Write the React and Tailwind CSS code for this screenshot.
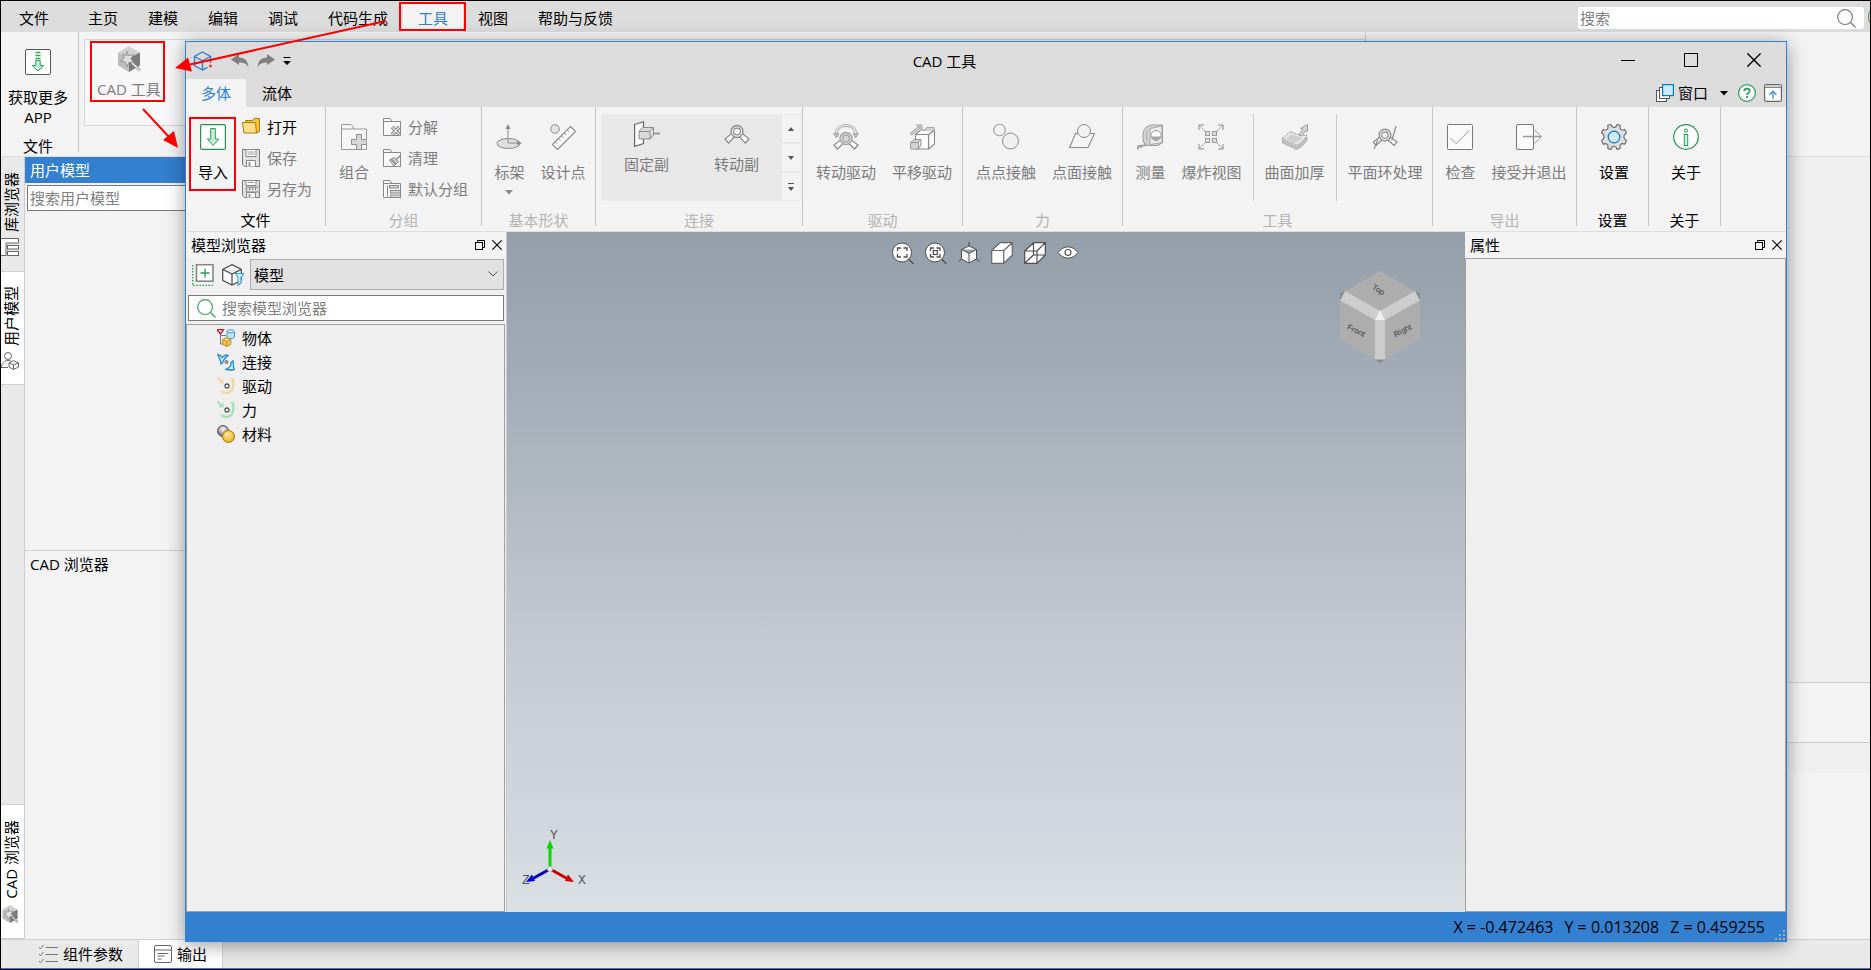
import React from "react";

/* ---------- icon helpers ---------- */

function Svg({ size = 26, box = 26, children, className = "" }) {
  return (
    <svg
      width={size}
      height={size}
      viewBox={`0 0 ${box} ${box}`}
      fill="none"
      aria-hidden="true"
      className={`block shrink-0 ${className}`}
    >
      {children}
    </svg>
  );
}

const G = "#8a8a8a";

/* ---------- main window icons ---------- */

const GetAppIcon = () => (
  <Svg>
    <rect x="0.5" y="0.5" width="25" height="25" rx="1.5" fill="#fff" stroke="#555" />
    <path d="M10.500 3.500h5M10.500 6.500h5M10.500 9.500h5" stroke="#2fa351" strokeWidth="1.6" />
    <path d="M10.800 11.500h4.400v5h3.600L13 22l-5.800-5.500h3.600z" fill="#c9f5dc" stroke="#2a9b5c" />
  </Svg>
);

const CadToolIcon = ({ size = 26 }) => (
  <Svg size={size}>
    <path d="M13 0 24 6.500 13 12 2 6.500z" fill="#d2d2d2" />
    <path d="M2 6.500 13 12v14L2 19.500z" fill="#bdbdbd" />
    <path d="M24 6.500 13 12v14l11-6.500z" fill="#7c7c7c" />
    <path d="m10.500 5 2.200 4.500 5-.8-2.900 4.100 3 4-4.900-.4-2 4.400-1.600-4.800-5-.6 4-3.100-1.400-4.500 4 2z" fill="#dedede" stroke="#8d8d8d" strokeWidth="0.9" />
    <path d="m15.500 16.500 8.500 8" stroke="#8f8f8f" strokeWidth="3" />
    <path d="m16 17 8 7.500" stroke="#efefef" strokeWidth="1.200" />
  </Svg>
);

const SearchIcon = ({ color = "#777", size = 20 }) => (
  <Svg size={size} box={20}>
    <circle cx="8.500" cy="8.500" r="7.800" stroke={color} strokeWidth="1.200" />
    <path d="m14 14 5.500 5.500" stroke={color} strokeWidth="1.300" />
  </Svg>
);

const LibraryIcon = () => (
  <Svg size={18} box={18}>
    <path d="M0 .5h17.500v4.500H5V17.500H0" fill="#fff" stroke="#666" />
    <rect x="6.500" y="7.500" width="11" height="3.500" fill="#fff" stroke="#666" />
    <rect x="6.500" y="13.500" width="11" height="4" fill="#fff" stroke="#666" />
  </Svg>
);

const UserModelIcon = () => (
  <Svg size={18} box={18}>
    <circle cx="7" cy="4" r="3.500" stroke="#666" />
    <path d="M0 15.500h7M.5 15.500c0-4 2.500-7 6.500-7 1.500 0 2.500.4 3.500 1" stroke="#666" />
    <path d="m12.500 8.500 5 2.500v4l-5 2.500-4.500-2.500v-4zM8 11l4.500 2 5-2M12.500 13v4.500" fill="#fff" stroke="#666" />
  </Svg>
);

const ParamsIcon = () => (
  <Svg size={19} box={19}>
    <path d="M6.500 2.500H19M6.500 9.500H19M6.500 16.500H19" stroke="#777" />
    <path d="m0 2 1.500 1.800L4.500 0M0 9l1.500 1.800L4.500 7M0 16l1.500 1.800L4.500 14" stroke="#777" />
  </Svg>
);

const OutputIcon = () => (
  <Svg size={18} box={18}>
    <rect x="0.5" y="0.5" width="17" height="17" rx="1.500" fill="#fff" stroke="#666" />
    <path d="M.5 5h17M3.500 8.500h11M3.500 11h7M3.500 14h4" stroke="#666" />
  </Svg>
);

/* ---------- title bar icons ---------- */

const LogoIcon = () => (
  <Svg size={20} box={20}>
    <path d="M17.500 12V5.500L9.500 1 1.500 5.500v9.200L9.500 19l5-2.700M1.500 5.500l8 4.300 8-4.300M9.500 9.800V19" stroke="#3380d0" strokeWidth="1.400" />
    <circle cx="17.500" cy="15" r="1.500" fill="#f03a3a" />
  </Svg>
);

const UndoIcon = () => (
  <Svg size={18} box={18}>
    <path d="M0 7.500 8 2v3.500c6 .3 9 3.500 9.500 9.500-2.500-3.500-5-4.500-9.500-4.500V13z" fill="#808080" />
  </Svg>
);

const CaretDown = () => (
  <Svg size={8} box={8}>
    <path d="M0 2h8L4 6.500z" fill="#000" />
  </Svg>
);

const WindowsIcon = () => (
  <Svg size={18} box={18}>
    <rect x="0.5" y="6.500" width="10" height="11" fill="#fff" stroke="#555" />
    <rect x="3.500" y="3.500" width="10" height="11" fill="#fff" stroke="#555" />
    <rect x="6.600" y="0.600" width="10.800" height="11" fill="#cfe9ff" stroke="#0a78c8" strokeWidth="1.200" />
  </Svg>
);

const HelpIcon = () => (
  <Svg size={18} box={18}>
    <circle cx="9" cy="9" r="8.400" fill="#fff" stroke="#2d9a55" strokeWidth="1.200" />
    <path d="M6.300 7c0-3.200 5.400-3.200 5.400 0 0 1.900-2.700 1.900-2.700 4" stroke="#2d9a55" strokeWidth="1.800" />
    <rect x="8.100" y="12" width="1.900" height="1.900" fill="#2d9a55" />
  </Svg>
);

const CollapseIcon = () => (
  <Svg size={18} box={18}>
    <rect x="0.6" y="0.6" width="16.800" height="16.800" rx="1.500" fill="#fff" stroke="#666" strokeWidth="1.200" />
    <path d="M1 3.500h16" stroke="#777" />
    <path d="M1.200 1.200h15.600v2H1.200z" fill="#ccc" />
    <path d="M9 15V8M5.500 10.800 9 7.300l3.500 3.500" stroke="#3b9bd9" strokeWidth="1.400" />
  </Svg>
);

/* ---------- ribbon icons ---------- */

const ImportIcon = () => (
  <Svg>
    <rect x="0.600" y="0.600" width="24.800" height="24.800" rx="1.500" fill="#fff" stroke="#2a8c55" strokeWidth="1.200" />
    <path d="M10.700 4.500h4.600V15h3.400L13 21.500 7.300 15h3.400z" fill="#c5f4da" stroke="#2a9b5c" />
  </Svg>
);

const OpenIcon = () => (
  <Svg size={18} box={18}>
    <path d="M3.500 2.500h7l1.500-2h5.500v13l-3 1.500z" fill="#f5c33b" stroke="#a87b14" />
    <path d="M.5 4.500h13l1 10.500H2z" fill="#ffdf86" stroke="#a87b14" />
  </Svg>
);

const SaveIcon = () => (
  <Svg size={18} box={18}>
    <path d="M.5.5h17v17H2.500l-2-2z" fill="#e2e2e2" stroke="#777" />
    <path d="M4 .5h10v7H4z" fill="#fff" stroke="#888" />
    <path d="M5.500 3h7M5.500 5h7" stroke="#999" />
    <path d="M4.500 17.500v-6h9v6" fill="#fff" stroke="#888" />
    <rect x="6.500" y="13" width="2" height="4" fill="#999" />
  </Svg>
);

const SaveAsIcon = () => (
  <Svg size={18} box={18}>
    <path d="M.5.5h17v17H2.500l-2-2z" fill="#e2e2e2" stroke="#777" />
    <path d="M4 .5h10v5H4z" fill="#fff" stroke="#888" />
    <path d="M5.500 2.500h7" stroke="#999" />
    <path d="M4.500 17.500v-5h9v5" fill="#fff" stroke="#888" />
    <rect x="4.500" y="7" width="13" height="5" fill="#ddd" stroke="#888" />
    <path d="M7.500 7v3M10.500 7v3M13.500 7v3" stroke="#888" />
    <rect x="6.500" y="14" width="2" height="3" fill="#999" />
  </Svg>
);

const GroupIcon = () => (
  <Svg>
    <path d="M.5 25.500V.5h9.500l3.500 4.500h12v20.500z" fill="#f6f6f6" stroke="#9a9a9a" />
    <path d="M.5 5h13" stroke="#9a9a9a" />
    <path d="M15.500 10.500h5v5h5.300v5h-5.300v5h-5v-5H10.500v-5h5z" fill="#d6d6d6" stroke="#8f8f8f" />
  </Svg>
);

function SmallFolder({ children }) {
  return (
    <Svg size={18} box={18}>
      <path d="M.5 17V.5h6.500L9 3.500h8.500V17.500H.5z" fill="#fafafa" stroke="#888" />
      <path d="M.5 3.500H9" stroke="#888" />
      {children}
    </Svg>
  );
}

const UngroupIcon = () => (
  <SmallFolder>
    <path d="m9 9 7.500 7.500M16.500 9 9 16.500" stroke="#888" strokeWidth="3.600" />
    <path d="m9 9 7.500 7.500M16.500 9 9 16.500" stroke="#e2e2e2" strokeWidth="1.400" />
  </SmallFolder>
);

const CleanIcon = () => (
  <SmallFolder>
    <path d="m6.500 11 5-2.500 4 4L11 17z" fill="#d0d0d0" stroke="#888" />
    <path d="m13 11 4.500-4.500M8.500 10.500l4.500 4.500" stroke="#888" strokeWidth="1.500" />
  </SmallFolder>
);

const DefaultGroupIcon = () => (
  <SmallFolder>
    <path d="M4.500 5.500v11" stroke="#888" />
    <rect x="6.500" y="5.500" width="9" height="2.500" fill="#d8d8d8" stroke="#888" />
    <rect x="7.500" y="10.500" width="10" height="2.500" fill="#d8d8d8" stroke="#888" />
    <rect x="7.500" y="15" width="10" height="2.500" fill="#d8d8d8" stroke="#888" />
  </SmallFolder>
);

const FrameIcon = () => (
  <Svg>
    <ellipse cx="12.500" cy="19.500" rx="11.500" ry="5" fill="#dedede" stroke={G} />
    <path d="M12 19V2M12 19h12" stroke={G} />
    <path d="m12 0 2.500 5h-5zM26 19l-5-2v4z" fill={G} />
  </Svg>
);

const DesignPointIcon = () => (
  <Svg>
    <circle cx="5" cy="5" r="4.300" fill="#e4e4e4" stroke={G} />
    <path d="m20.500 2.500 5 5L7.500 25.500l-5-5z" fill="#fff" stroke={G} strokeWidth="1.200" />
    <path d="m17.500 6 2 2M14.500 9l2 2M11.500 12l2 2M8.500 15l2 2M5.500 18l2 2" stroke={G} />
  </Svg>
);

const FixedJointIcon = () => (
  <Svg>
    <path d="M.6 3.500 9.500.8v21.700L.6 25.300z" fill="#fff" stroke="#666" strokeWidth="1.200" />
    <path d="M5 10.500h11v7.500H5zM5 10.500l3.500-4h11l-3.500 4M19.500 6.500v7.500L16 18" fill="#dadada" stroke="#8a8a8a" />
    <path d="M19.500 12.500H26" stroke="#9a9a9a" strokeWidth="2" />
  </Svg>
);

const RevoluteIcon = () => (
  <Svg>
    <path d="m7.500 12.500 3 3.500-6 6-3.500-4zM18.500 12.500l-3 3.500 6 6 3.500-4z" fill="#fff" stroke={G} strokeWidth="1.200" />
    <circle cx="13" cy="10.500" r="6" fill="#eee" stroke={G} strokeWidth="1.300" />
    <circle cx="13" cy="10.500" r="3.400" fill="#fff" stroke={G} strokeWidth="1.200" />
  </Svg>
);

const RotDriveIcon = () => (
  <Svg>
    <path d="M3 11C3 4.500 7.500 1.500 13 1.500S23 4.500 23 11" stroke="#aaa" strokeWidth="3" />
    <path d="M3 11C3 4.500 7.500 1.500 13 1.500S23 4.500 23 11" stroke="#eee" strokeWidth="1.200" />
    <path d="M.5 9.500h5.500L3.500 14zM20 9.500h5.500L22.500 14z" fill="#bbb" stroke="#aaa" />
    <path d="m7.500 16 2.500 3.500-5.500 5.500-3.500-4zM18.500 16 16 19.500l5.500 5.500 3.500-4z" fill="#fff" stroke={G} strokeWidth="1.200" />
    <circle cx="13" cy="14.500" r="6" fill="#d8d8d8" stroke="#a2a2a2" strokeWidth="1.300" />
    <circle cx="13" cy="14.500" r="3.300" fill="#d8d8d8" stroke="#a2a2a2" strokeWidth="1.200" />
  </Svg>
);

const TransDriveIcon = () => (
  <Svg>
    <path d="M1.500 10.500 10.500 3" stroke="#aaa" strokeWidth="3" />
    <path d="M1.500 10.500 10.500 3" stroke="#eee" />
    <path d="M7.500 1h5.500v4z" fill="#ccc" stroke="#aaa" />
    <path d="M6.500 10.500h13v14.500h-13zM6.500 10.500l5-4.500h14l-6 4.500M25.500 6v14l-6 5" fill="#fff" stroke={G} strokeWidth="1.200" />
    <path d="m15 6 3-2.500h7v3" fill="#d5d5d5" stroke="#a5a5a5" />
    <path d="M1.500 18.500h8v6.500h-8zM1.500 18.500 5 15.500h7l-2.500 3M12 15.500v6L9.500 25" fill="#d2d2d2" stroke="#9a9a9a" />
  </Svg>
);

const PointPointIcon = () => (
  <Svg>
    <circle cx="6.500" cy="6" r="5.800" fill="#f4f4f4" stroke={G} />
    <circle cx="17.500" cy="17" r="8" fill="#f0f0f0" stroke={G} />
  </Svg>
);

const PointPlaneIcon = () => (
  <Svg>
    <path d="M6.500 9.500h19L19 23.500H.7z" fill="#f4f4f4" stroke={G} strokeWidth="1.100" />
    <circle cx="15" cy="7" r="6.500" fill="#f2f2f2" stroke={G} />
  </Svg>
);

const MeasureIcon = () => (
  <Svg>
    <path d="M9.500 3 14 1h11.500v17.500L21 21.500H10.500L7 19c-1.500-4-1.500-9 0-13z" fill="#d4d4d4" stroke="#999" />
    <path d="M13 4.500 25 2v16.500l-12 2z" fill="#eee" stroke="#a5a5a5" />
    <circle cx="19" cy="11.500" r="5" fill="#fff" stroke="#999" />
    <path d="M14.300 12.500h9.400c-.6 5-8.800 5-9.400 0z" fill="#a5a5a5" />
    <path d="M9.500 20.500C7 22.500 4 21 1 22.500v3M4 22v2" stroke="#999" strokeWidth="1.800" />
    <path d="M10.500 6c-1.500 4-1.500 8 0 11" stroke="#aaa" />
  </Svg>
);

const ExplodeIcon = () => (
  <Svg>
    <path d="m7 7-5.500-5.500M19 7l5.500-5.500M7 19l-5.500 5.500M19 19l5.500 5.500" stroke={G} strokeDasharray="2 1" />
    <path d="M1 6V1h5M20 1h5v5M1 20v5h5M20 25h5v-5" stroke={G} />
    <rect x="7.500" y="7.500" width="4" height="4" fill="#ddd" stroke="#999" />
    <rect x="14.500" y="7.500" width="4" height="4" fill="#ddd" stroke="#999" />
    <rect x="7.500" y="14.500" width="4" height="4" fill="#ddd" stroke="#999" />
    <rect x="14.500" y="14.500" width="4" height="4" fill="#ddd" stroke="#999" />
  </Svg>
);

const ThickenIcon = () => (
  <Svg>
    <path d="M0 14c4-1 5-5 9-6.500 5 3 10 4 16 4-3 4-6 8-11 9.500-4-3-9-4-14-7z" fill="#e8e8e8" stroke="#999" strokeDasharray="2 1" />
    <path d="M0 15.500c5 3 10 4 14 7 5-1.500 8-5.500 11-9.500v3c-3 4-6 8-11 9.500-4-3-9-4-14-7z" fill="#c4c4c4" stroke="#aaa" />
    <path d="M4 14c3-1 4-3 6-4 3 2 7 3 10 3-2 3-4 5-7 6-3-2-6-3-9-5z" fill="#cdcdcd" />
    <path d="m17 11 4-6-2.500-.5L25.500.500v7l-2-1L19.500 12z" fill="#d8d8d8" stroke="#999" />
  </Svg>
);

const PlaneLoopIcon = () => (
  <Svg>
    <path d="m7.500 13 2.500 3-6 5.500-2.500-3.500zM18.500 13 16 16l6 5.500 3-3.500z" fill="#fff" stroke={G} strokeWidth="1.200" />
    <circle cx="13" cy="11" r="5.800" fill="#e9e9e9" stroke={G} strokeWidth="1.300" />
    <circle cx="13" cy="11" r="3.200" fill="#fff" stroke={G} strokeWidth="1.200" />
    <path d="M24 2 20 16M6 15.500 2 25" stroke={G} strokeWidth="1.200" />
  </Svg>
);

const CheckIcon = () => (
  <Svg>
    <rect x="0.5" y="0.5" width="25" height="25" rx="1" fill="#fafafa" stroke="#777" />
    <path d="m3.500 14 5.500 5.500L22.500 6.500" stroke="#999" />
  </Svg>
);

const ExitIcon = () => (
  <Svg>
    <rect x="0.5" y="0.5" width="17" height="25" rx="1.500" fill="#fafafa" stroke="#777" />
    <path d="M7 12.500h18" stroke="#999" strokeWidth="1.500" />
    <path d="m18.500 6 7 6.500-7 7" stroke="#999" />
  </Svg>
);

const GearIcon = () => (
  <Svg>
    <path
      d="M8.300.7h1.900c.5 2.200 1.300 2.800 2.800 2.800s2.300-.6 2.800-2.800h1.900l1.600.8c-.7 2.200-.4 3.100.5 3.900s1.900 1 3.900 0l1.100 2.200.6 1.400c-2 1.200-2.600 2.300-2.600 3.800s.6 2.700 2.600 3.800l-.6 1.500-1.100 2.200c-2-1-3-.8-3.900 0s-1.200 1.800-.5 3.900l-1.600.9h-1.900c-.5-2.200-1.300-2.800-2.800-2.800s-2.300.6-2.800 2.800H8.300l-1.600-.9c.7-2.100.4-3.100-.5-3.900s-1.900-1-3.900 0l-1.100-2.200-.6-1.500c2-1.100 2.600-2.300 2.600-3.800S2.600 10.200.6 9l.6-1.400 1.100-2.200c2 1 3 .8 3.900 0s1.200-1.700.5-3.900z"
      fill="#dedede"
      stroke="#666"
      strokeWidth="1.100"
    />
    <circle cx="13" cy="13" r="5.800" fill="#cfe9ff" stroke="#0a78c8" strokeWidth="1.200" />
  </Svg>
);

const AboutIcon = () => (
  <Svg>
    <circle cx="13" cy="13" r="12.300" fill="#fff" stroke="#2a9257" strokeWidth="1.200" />
    <circle cx="13" cy="6.500" r="1.600" fill="#c5f4da" stroke="#2a9b5c" />
    <rect x="11.300" y="10.500" width="3.400" height="11" fill="#c5f4da" stroke="#2a9b5c" />
  </Svg>
);

/* ---------- panel icons ---------- */

const FloatIcon = () => (
  <Svg size={10} box={10}>
    <path d="M2.500 2V.5h7v7H8" stroke="#000" />
    <rect x="0.5" y="2.500" width="7" height="7" stroke="#000" />
  </Svg>
);

const CloseIcon = ({ size = 10 }) => (
  <Svg size={size} box={10}>
    <path d="m.3.300 9.400 9.400M9.700.300.300 9.700" stroke="#000" strokeWidth={size > 10 ? 1 : 1.100} />
  </Svg>
);

const AddNodeIcon = () => (
  <Svg size={22} box={22}>
    <rect x="4.500" y="0.700" width="16.500" height="16.500" fill="#fff" stroke="#888" strokeWidth="1.600" />
    <path d="M13 4.500v9M8.500 9h9" stroke="#2d9a55" strokeWidth="1.300" />
    <path d="M.7 1v20.300H22" stroke="#2d9a55" strokeDasharray="1.500 1.500" strokeWidth="1.300" />
  </Svg>
);

const CubeFilterIcon = () => (
  <Svg size={22} box={22}>
    <path d="m10 .7 9.300 4.600v11L10 21 .7 16.300v-11zM.7 5.300 10 10l9.300-4.700M10 10v11" fill="#fff" stroke="#555" strokeWidth="1.300" />
    <path d="M13.500 9.500h8l-2.500 4v5.500l-3 2.500v-8z" fill="#d5efff" stroke="#3b9bd9" strokeWidth="1.100" />
  </Svg>
);

const BodiesIcon = () => (
  <Svg size={18} box={18}>
    <path d="M0 .5h6.500L3.500 5z" fill="#fff" stroke="#c8202f" strokeWidth="1.400" />
    <path d="M3.500 5v10H7M3.500 6.500H9" stroke="#777" />
    <path d="M10 2.500v5.500c0 2 7.500 2 7.500 0V2.500" fill="#bfe4fb" stroke="#3b9bd9" />
    <ellipse cx="13.700" cy="2.300" rx="3.700" ry="1.500" fill="#e3f4ff" stroke="#3b9bd9" />
    <path d="m9.800 8.500 4 2v4.800l-4 2.200-4-2.200v-4.800zM5.800 10.500l4 2 4-2M9.800 12.500v5" fill="#f8c94b" stroke="#c18a17" />
  </Svg>
);

const JointsIcon = () => (
  <Svg size={18} box={18}>
    <path d="M.8 1.500 3.500 2.500 5 4.500c1.500 0 2-2 3.500-2.500l2.500.500L8 5 5.500 9.500 4 11l-.5-3zM17.200 16.500l-3 .5-5.200-.5 3.500-2.500c1.500-.5 1.500-3 1.500-4.500l2-1.500.5 4.500c-.5 1.500.7 2.500.7 4z" fill="#d5efff" stroke="#1f86cf" strokeWidth="1.300" />
    <circle cx="9.500" cy="9" r="2" fill="#888" />
  </Svg>
);

const MotionIcon = ({ color }) => (
  <Svg size={18} box={18}>
    <path d="M15.500 4c2.500 6-1 12-6 12-2.500 0-4-.8-5.500-2" stroke={color} strokeWidth="2.600" />
    <path d="M12.500 1.500 17.500 1v5z" fill={color} />
    <path d="m0 0 5 5" stroke={color} strokeWidth="2" />
    <path d="M6.500 1.500v5h-5z" fill={color} />
    <circle cx="10" cy="9" r="2" fill="#fff" stroke="#555" strokeWidth="1.300" />
  </Svg>
);

const MaterialIcon = () => (
  <Svg size={18} box={18}>
    <defs>
      <radialGradient id="steel" cx="0.5" cy="0.35" r="0.700">
        <stop offset="0" stopColor="#fff" />
        <stop offset="1" stopColor="#555" />
      </radialGradient>
      <radialGradient id="gold" cx="0.45" cy="0.35" r="0.700">
        <stop offset="0" stopColor="#ffe9a0" />
        <stop offset="1" stopColor="#e9a90c" />
      </radialGradient>
    </defs>
    <circle cx="6" cy="6" r="5.500" fill="url(#steel)" stroke="#555" />
    <circle cx="11.500" cy="11.500" r="6" fill="url(#gold)" stroke="#a8790c" />
  </Svg>
);

/* ---------- viewport icons ---------- */

const S = "#4d4d4d";

const ZoomFitIcon = ({ centre }) => (
  <Svg size={22} box={22}>
    <circle cx="10" cy="10.500" r="9.500" fill="#fff" stroke={S} />
    <path d="m16.500 17 5 5" stroke={S} strokeWidth="1.300" />
    <path d="M5.500 9V6H9M11.500 6H15v3M15 12v3h-3.500M9 15H5.500v-3" stroke={S} strokeWidth="1.300" />
    {centre && <rect x="8.300" y="8.500" width="4" height="4" stroke={S} strokeWidth="1.200" />}
  </Svg>
);

const IsoIcon = () => (
  <Svg size={22} box={22}>
    <path d="M11 0v5M4 16.500.500 19.500M18 16.500l3.500 3" stroke={S} />
    <path d="m11 4 7.500 3.500V17L11 21l-7.500-4V7.500zM3.500 7.500 11 11.500l7.500-4M11 11.500V21" fill="#fff" stroke={S} />
  </Svg>
);

const SolidIcon = () => (
  <Svg size={22} box={22}>
    <path d="M.7 21.300V8.500L9 .7h12.300v12.500l-8.600 8.100z" fill="#fff" />
    <path d="M.7 8.500h12v12.800H.7zM.7 8.500 9 .7h12.300l-8.600 7.800M21.300.7v12.500l-8.600 8.100" stroke="#666" strokeWidth="1.200" />
  </Svg>
);

const WireIcon = () => (
  <Svg size={22} box={22}>
    <path d="M.7 21.300V9L9.500.7h11.800V13l-8 8.300z" fill="#fff" />
    <path d="M.7 9h12.300v12.300H.7zM9.500.7h11.800V13H9.500zM.7 9 9.500.7M13 9 21.300.7M13 21.300 21.300 13M.7 21.300 9.500 13" stroke={S} strokeWidth="1.200" />
  </Svg>
);

const EyeIcon = () => (
  <Svg size={22} box={22}>
    <path d="M1 10.500C6.500 3 15.500 3 21 10.500 15.500 18 6.500 18 1 10.500z" fill="#fff" stroke={S} />
    <circle cx="11" cy="10.500" r="3" stroke={S} strokeWidth="1.200" />
  </Svg>
);

/* ---------- building blocks ---------- */

function RibbonGroup({ title, width, active, children }) {
  return (
    <section className={`flex h-[119px] shrink-0 flex-col border-r border-[#c4c4c4] ${width}`}>
      <div className="flex h-[103px] shrink-0 justify-center pl-[3px]">{children}</div>
      <h2 className={`text-center leading-5 ${active ? "text-black" : "text-[#b3b3b3]"}`}>{title}</h2>
    </section>
  );
}

function BigButton({ icon, label, active, caret }) {
  return (
    <button
      type="button"
      className={`flex shrink-0 flex-col items-center px-2 pt-[17px] leading-5 whitespace-nowrap ${active ? "text-black" : "text-[#7c7c7c]"}`}
    >
      {icon}
      <span className="mt-3">{label}</span>
      {caret && (
        <svg width="8" height="5" viewBox="0 0 8 5" aria-hidden="true" className="mt-2">
          <path d="M0 0h8L4 4.500z" fill="#8a8a8a" />
        </svg>
      )}
    </button>
  );
}

function SmallButton({ icon, label, active }) {
  return (
    <button
      type="button"
      className={`flex h-[31px] items-center gap-[7px] leading-5 whitespace-nowrap ${active ? "text-black" : "text-[#7c7c7c]"}`}
    >
      {icon}
      {label}
    </button>
  );
}

const Divider = () => <span className="mx-[3px] mt-[7px] h-[87px] w-px shrink-0 bg-[#cbcbcb]" />;

function PanelHeader({ title }) {
  return (
    <header className="flex h-[26px] shrink-0 items-center gap-[7px] bg-[#f3f3f3] pr-1 pl-[5px]">
      <h2 className="flex-1 leading-5">{title}</h2>
      <button type="button" aria-label={`浮动${title}`}>
        <FloatIcon />
      </button>
      <button type="button" aria-label={`关闭${title}`}>
        <CloseIcon />
      </button>
    </header>
  );
}

function SideTab({ label, icon, className }) {
  return (
    <button
      type="button"
      className={`flex w-full shrink-0 flex-col items-start justify-center gap-1.5 border-b border-[#cfcfcf] ${className}`}
    >
      <span className="rotate-180 leading-5 whitespace-nowrap [text-orientation:sideways] [writing-mode:vertical-rl]">{label}</span>
      {icon}
    </button>
  );
}

/* ---------- CAD window ---------- */

function TitleBar() {
  return (
    <header className="flex h-[37px] shrink-0 items-center bg-[#dcdcdc]">
      <div className="flex w-[107px] items-center gap-2 pl-[7px]">
        <LogoIcon />
        <button type="button" aria-label="撤销" className="ml-2.5">
          <UndoIcon />
        </button>
        <button type="button" aria-label="重做" className="-scale-x-100">
          <UndoIcon />
        </button>
        <button type="button" aria-label="自定义快速访问工具栏">
          <svg width="8" height="8" viewBox="0 0 8 8" aria-hidden="true">
            <path d="M.5 0h7v1h-7zM0 4h8L4 8z" fill="#000" />
          </svg>
        </button>
      </div>
      <h1 className="flex-1 text-center leading-5">CAD 工具</h1>
      <div className="flex h-full pr-px pb-px">
        <button type="button" aria-label="最小化" className="flex w-[63px] items-center justify-center">
          <span className="h-px w-3.5 bg-black" />
        </button>
        <button type="button" aria-label="最大化" className="flex w-[63px] items-center justify-center">
          <span className="size-3.5 border border-black" />
        </button>
        <button type="button" aria-label="关闭" className="flex w-[63px] items-center justify-center">
          <CloseIcon size={14} />
        </button>
      </div>
    </header>
  );
}

function TabRow() {
  return (
    <div className="flex h-7 shrink-0 items-stretch bg-[#dcdcdc]">
      <button type="button" className="bg-[#f3f3f3] px-[15px] leading-5 text-[#3380d0]">
        多体
      </button>
      <button type="button" className="px-4 leading-5">
        流体
      </button>
      <div className="ml-auto flex items-center gap-2 pr-1">
        <button type="button" className="flex items-center gap-1 leading-5">
          <WindowsIcon />
          窗口
          <span className="pr-0.5 pl-2">
            <CaretDown />
          </span>
        </button>
        <button type="button" aria-label="帮助">
          <HelpIcon />
        </button>
        <button type="button" aria-label="折叠功能区">
          <CollapseIcon />
        </button>
      </div>
    </div>
  );
}

function GalleryItem({ icon, label }) {
  return (
    <button type="button" className="flex w-[90px] flex-col items-center pt-1.5 leading-5 text-[#7c7c7c]">
      {icon}
      <span className="mt-[7px]">{label}</span>
    </button>
  );
}

function GalleryScroll({ label, path }) {
  return (
    <button type="button" aria-label={label} className="flex flex-1 items-center justify-center bg-[#f3f3f3]">
      <svg width="6" height="8" viewBox="0 0 6 8" aria-hidden="true">
        <path d={path} fill="#555" />
      </svg>
    </button>
  );
}

function Ribbon() {
  return (
    <div className="flex h-[125px] shrink-0 overflow-hidden border-b border-[#dedede] bg-[#f3f3f3]">
      <RibbonGroup title="文件" width="w-[140px]" active>
        <div className="flex flex-1 pl-px">
          <BigButton icon={<ImportIcon />} label="导入" active />
          <div className="pt-1 pl-1.5">
            <SmallButton icon={<OpenIcon />} label="打开" active />
            <SmallButton icon={<SaveIcon />} label="保存" />
            <SmallButton icon={<SaveAsIcon />} label="另存为" />
          </div>
        </div>
      </RibbonGroup>
      <RibbonGroup title="分组" width="w-[156px]">
        <div className="flex flex-1 pl-0.5">
          <BigButton icon={<GroupIcon />} label="组合" />
          <div className="pt-1 pl-1.5">
            <SmallButton icon={<UngroupIcon />} label="分解" />
            <SmallButton icon={<CleanIcon />} label="清理" />
            <SmallButton icon={<DefaultGroupIcon />} label="默认分组" />
          </div>
        </div>
      </RibbonGroup>
      <RibbonGroup title="基本形状" width="w-[114px]">
        <BigButton icon={<FrameIcon />} label="标架" caret />
        <BigButton icon={<DesignPointIcon />} label="设计点" />
      </RibbonGroup>
      <RibbonGroup title="连接" width="w-[207px]">
        <div className="mt-[7px] flex h-[87px] border border-[#ececec] bg-[#e8e8e8]">
          <GalleryItem icon={<FixedJointIcon />} label="固定副" />
          <GalleryItem icon={<RevoluteIcon />} label="转动副" />
          <div className="flex w-[18px] flex-col gap-0.5">
            <GalleryScroll label="上一行" path="M3 2 6 6H0z" />
            <GalleryScroll label="下一行" path="M0 2h6L3 6z" />
            <GalleryScroll label="展开" path="M0 0h6v1H0zM0 4h6L3 8z" />
          </div>
        </div>
      </RibbonGroup>
      <RibbonGroup title="驱动" width="w-[160px]">
        <BigButton icon={<RotDriveIcon />} label="转动驱动" />
        <BigButton icon={<TransDriveIcon />} label="平移驱动" />
      </RibbonGroup>
      <RibbonGroup title="力" width="w-[160px]">
        <BigButton icon={<PointPointIcon />} label="点点接触" />
        <BigButton icon={<PointPlaneIcon />} label="点面接触" />
      </RibbonGroup>
      <RibbonGroup title="工具" width="w-[310px]">
        <BigButton icon={<MeasureIcon />} label="测量" />
        <BigButton icon={<ExplodeIcon />} label="爆炸视图" />
        <Divider />
        <BigButton icon={<ThickenIcon />} label="曲面加厚" />
        <Divider />
        <BigButton icon={<PlaneLoopIcon />} label="平面环处理" />
      </RibbonGroup>
      <RibbonGroup title="导出" width="w-[144px]">
        <BigButton icon={<CheckIcon />} label="检查" />
        <BigButton icon={<ExitIcon />} label="接受并退出" />
      </RibbonGroup>
      <RibbonGroup title="设置" width="w-[72px]" active>
        <BigButton icon={<GearIcon />} label="设置" active />
      </RibbonGroup>
      <RibbonGroup title="关于" width="w-[72px]" active>
        <BigButton icon={<AboutIcon />} label="关于" active />
      </RibbonGroup>
    </div>
  );
}

const treeItems = [
  { label: "物体", icon: <BodiesIcon /> },
  { label: "连接", icon: <JointsIcon /> },
  { label: "驱动", icon: <MotionIcon color="#f0d9a0" /> },
  { label: "力", icon: <MotionIcon color="#a8dfbb" /> },
  { label: "材料", icon: <MaterialIcon /> },
];

function ModelBrowser() {
  return (
    <aside className="flex w-[321px] shrink-0 flex-col border-r border-[#c9c9c9] bg-[#f0f0f0]">
      <PanelHeader title="模型浏览器" />
      <div className="flex h-[37px] shrink-0 items-center gap-2 pr-0.5 pb-1 pl-1.5">
        <button type="button" aria-label="新建模型">
          <AddNodeIcon />
        </button>
        <button type="button" aria-label="筛选模型">
          <CubeFilterIcon />
        </button>
        <div className="relative -ml-0.5 flex-1">
          <select
            aria-label="视图类型"
            className="block h-[31px] w-full appearance-none border border-[#adadad] bg-[#e1e1e1] px-[3px] leading-5"
          >
            <option>模型</option>
          </select>
          <svg width="10" height="6" viewBox="0 0 10 6" fill="none" aria-hidden="true" className="pointer-events-none absolute top-3 right-1.5">
            <path d="m.5.500 4.500 4.500L9.500.500" stroke="#555" />
          </svg>
        </div>
      </div>
      <label className="mr-0.5 ml-0.5 flex h-[26px] shrink-0 items-center gap-1.5 border border-[#7a7a7a] bg-white pl-2">
        <SearchIcon color="#3aa35f" size={19} />
        <input
          type="text"
          aria-label="搜索模型浏览器"
          placeholder="搜索模型浏览器"
          className="min-w-0 flex-1 leading-5 outline-none placeholder:text-[#808080]"
        />
      </label>
      <ul className="mt-[3px] mr-px flex-1 border border-[#a0a0a0] bg-[#efefef] pt-px">
        {treeItems.map((item) => (
          <li key={item.label} className="flex h-6 items-center gap-[7px] pl-[30px] leading-5">
            {item.icon}
            {item.label}
          </li>
        ))}
      </ul>
    </aside>
  );
}

function NavCube() {
  return (
    <svg width="80" height="92" viewBox="0 0 80 92" role="img" aria-label="视图方向" className="absolute top-[39px] right-[45px]">
      <path d="M0 22 5 20v10H0zM80 22l-5-2v10h5zM34 88h12l-6 4z" fill="#858b90" />
      <path d="M40 0 75 20.500 40 41 5 20.500z" fill="#adadad" />
      <path d="M0 29.500 35 49v39.500L0 68z" fill="#adadad" />
      <path d="M80 29.500 45 49v39.500L80 68z" fill="#adadad" />
      <path d="M5 20 40 40l-5 9L0 29.500zM75 20 40 40l5 9 35-19.500z" fill="#cdcdcd" />
      <path d="M35 48h10v40.500H35z" fill="#cdcdcd" />
      <path d="m40 39 5 10H35z" fill="#efefef" />
      <g fontSize="8" fill="#3c3c3c" textAnchor="middle" fontFamily="Liberation Sans">
        <text transform="translate(37 21) rotate(32)">Top</text>
        <text transform="translate(15 62) rotate(26)">Front</text>
        <text transform="translate(64 62) rotate(-28)">Right</text>
      </g>
    </svg>
  );
}

function Triad() {
  return (
    <svg width="70" height="72" viewBox="0 -8 70 72" role="img" aria-label="坐标轴" className="absolute bottom-[18px] left-3.5">
      <path d="M29 39V18" stroke="#10d010" strokeWidth="3" />
      <path d="m29 10 3.500 8.500h-7z" fill="#00d800" />
      <path d="m29 39 18 10" stroke="#c80000" strokeWidth="3" />
      <path d="m53 52-9-1 3-6.500z" fill="#d00000" />
      <path d="m29 39-18 10" stroke="#0000b8" strokeWidth="3" />
      <path d="m5 52 9-1-3-6.500z" fill="#0000d0" />
      <circle cx="29" cy="39" r="2.500" fill="#eee" stroke="#bbb" />
      <g fontSize="13" fill="#555" className="font-['Liberation_Mono',monospace]">
        <text x="29" y="9">Y</text>
        <text x="57" y="54">X</text>
        <text x="1" y="54">Z</text>
      </g>
    </svg>
  );
}

const viewTools = [
  { label: "适应窗口", icon: <ZoomFitIcon /> },
  { label: "适应所选", icon: <ZoomFitIcon centre /> },
  { label: "等轴测视图", icon: <IsoIcon /> },
  { label: "实体显示", icon: <SolidIcon /> },
  { label: "线框显示", icon: <WireIcon /> },
  { label: "可见性", icon: <EyeIcon /> },
];

function Viewport() {
  return (
    <main className="relative min-w-0 flex-1 bg-[linear-gradient(to_bottom,#949fa9_0%,#a6afb9_25%,#b7bec8_45%,#c5cad3_62%,#d1d6df_87%,#d3dadd_91%,#dae0e4_100%)]">
      <div className="flex justify-center gap-[11px] pt-[10px] pr-px">
        {viewTools.map((tool) => (
          <button key={tool.label} type="button" aria-label={tool.label}>
            {tool.icon}
          </button>
        ))}
      </div>
      <NavCube />
      <Triad />
    </main>
  );
}

function CadWindow() {
  return (
    <div className="absolute top-[40px] right-[83px] bottom-[27px] left-[184px] flex flex-col border border-[#3380d0] bg-[#f0f0f0] shadow-[0_3px_18px_rgba(0,0,0,0.4)]">
      <TitleBar />
      <TabRow />
      <Ribbon />
      <div className="flex min-h-0 flex-1">
        <ModelBrowser />
        <Viewport />
        <aside className="flex w-[321px] shrink-0 flex-col">
          <PanelHeader title="属性" />
          <div className="flex-1 border border-[#a0a0a0] bg-[#efefef]" />
        </aside>
      </div>
      <footer className="relative flex h-[29px] shrink-0 items-center justify-end gap-[11px] bg-[#3380d0] pr-[21px] text-base leading-5">
        <span>X = -0.472463</span>
        <span>Y = 0.013208</span>
        <span>Z = 0.459255</span>
        <svg width="10" height="10" viewBox="0 0 10 10" aria-hidden="true" className="absolute right-px bottom-px">
          <path d="M8 0h2v2H8zM4 4h2v2H4zM8 4h2v2H8zM0 8h2v2H0zM4 8h2v2H4zM8 8h2v2H8z" fill="#a9a9a9" />
        </svg>
      </footer>
    </div>
  );
}

/* ---------- main application ---------- */

const menus = ["主页", "建模", "编辑", "调试", "代码生成", "工具", "视图", "帮助与反馈"];

function MenuBar() {
  return (
    <nav className="flex h-[31px] shrink-0 items-end overflow-hidden bg-[#dcdcdc] leading-5">
      <button type="button" className="h-7 w-[66px]">
        文件
      </button>
      <div className="ml-1.5 flex">
        {menus.map((menu) => (
          <button
            key={menu}
            type="button"
            className={`h-7 px-[15px] ${menu === "工具" ? "bg-[#f3f3f3] text-[#3380d0]" : ""}`}
          >
            {menu}
          </button>
        ))}
      </div>
      <label className="mr-1 mb-[3px] ml-auto flex h-[22px] w-[286px] items-center rounded-[3px] bg-white pr-2 pl-0.5">
        <input
          type="text"
          aria-label="搜索"
          placeholder="搜索"
          className="min-w-0 flex-1 leading-5 outline-none placeholder:text-[#808080]"
        />
        <SearchIcon size={19} />
      </label>
      <svg width="2" height="18" viewBox="0 0 2 18" fill="none" aria-hidden="true" className="mb-1.5">
        <path d="M2 3C0 7 0 11 2 15" stroke="#2d9a55" />
      </svg>
    </nav>
  );
}

function AppRibbon() {
  return (
    <div className="flex h-[125px] shrink-0 border-b border-[#dedede] bg-[#f3f3f3] leading-5">
      <section className="flex h-[120px] w-[78px] shrink-0 flex-col items-center border-r border-[#c4c4c4] pt-[17px] pr-[3px]">
        <button type="button" className="flex h-[87px] shrink-0 flex-col items-center">
          <GetAppIcon />
          <span className="mt-3">获取更多</span>
          <span>APP</span>
        </button>
        <h2 className="shrink-0">文件</h2>
      </section>
      <section className="h-[120px] w-[1287px] border-r border-[#cfcfcf] pt-[7px] pl-[5px]">
        <div className="h-[87px] border border-[#d6d6d6] bg-[#f7f7f7] px-3 pt-1.5">
          <button type="button" className="flex flex-col items-center text-[#7c7c7c]">
            <CadToolIcon />
            <span className="mt-[7px]">CAD 工具</span>
          </button>
        </div>
      </section>
    </div>
  );
}

function Annotations() {
  return (
    <div className="pointer-events-none absolute inset-0" aria-hidden="true">
      <svg width="480" height="200" viewBox="0 0 480 200" fill="none" className="absolute -top-px -left-px">
        <rect x="400" y="3" width="65" height="27" stroke="#f00" strokeWidth="2" />
        <rect x="91" y="42" width="73" height="59" stroke="#f00" strokeWidth="2" />
        <rect x="190" y="118" width="45" height="72" stroke="#f00" strokeWidth="2" />
        <path d="M386 21 190 64.500M143 109l26 28" stroke="#f00" strokeWidth="2" />
        <path d="m175 68 13-10.500 4 14zM178 148l-15-8 11-9z" fill="#f00" />
      </svg>
    </div>
  );
}

export default function App() {
  return (
    <div className='relative flex min-h-screen flex-col overflow-hidden border border-black bg-[#f3f3f3] font-["Open_Sans","Noto_Sans_CJK_SC",sans-serif] text-[15px] text-black'>
      <MenuBar />
      <AppRibbon />
      <div className="flex flex-1">
        <div className="flex w-6 shrink-0 flex-col border-r border-[#cfcfcf] bg-[#e9e9e9]">
          <SideTab label="库浏览器" icon={<LibraryIcon />} className="h-[115px]" />
          <SideTab label="用户模型" icon={<UserModelIcon />} className="h-[113px] bg-white" />
          <SideTab label="CAD 浏览器" icon={<CadToolIcon size={18} />} className="mt-auto h-[135px] border-t bg-white" />
        </div>
        <aside className="flex w-[300px] shrink-0 flex-col">
          <h2 className="h-[26px] bg-[#3380d0] pl-[5px] leading-[26px] text-white">用户模型</h2>
          <input
            type="text"
            aria-label="搜索用户模型"
            placeholder="搜索用户模型"
            className="mx-0.5 mt-0.5 h-[26px] border border-[#7a7a7a] bg-white px-0.5 leading-5 placeholder:text-[#808080]"
          />
          <div className="flex-1 border-b border-[#cfcfcf]" />
          <section className="h-[388px] pt-[3px] pl-[5px]">
            <h2 className="leading-5">CAD 浏览器</h2>
          </section>
        </aside>
        <div className="flex flex-1 flex-col">
          <div className="flex-1 border-b border-[#cfcfcf] bg-[#efefef]" />
          <div className="h-[60px] border-b border-[#cfcfcf]" />
          <div className="h-[30px] bg-[#efefef]" />
          <div className="h-[166px]" />
        </div>
      </div>
      <div className="flex h-[30px] shrink-0 border-t border-b border-t-[#cfcfcf] border-b-[#3380d0] bg-[#e9e9e9] leading-5">
        <button type="button" className="flex items-center gap-[5px] border-r border-[#cfcfcf] pr-[15px] pl-[38px]">
          <ParamsIcon />
          组件参数
        </button>
        <button type="button" className="flex items-center gap-[5px] border-r border-[#cfcfcf] bg-white px-[15px]">
          <OutputIcon />
          输出
        </button>
      </div>
      <CadWindow />
      <Annotations />
    </div>
  );
}
